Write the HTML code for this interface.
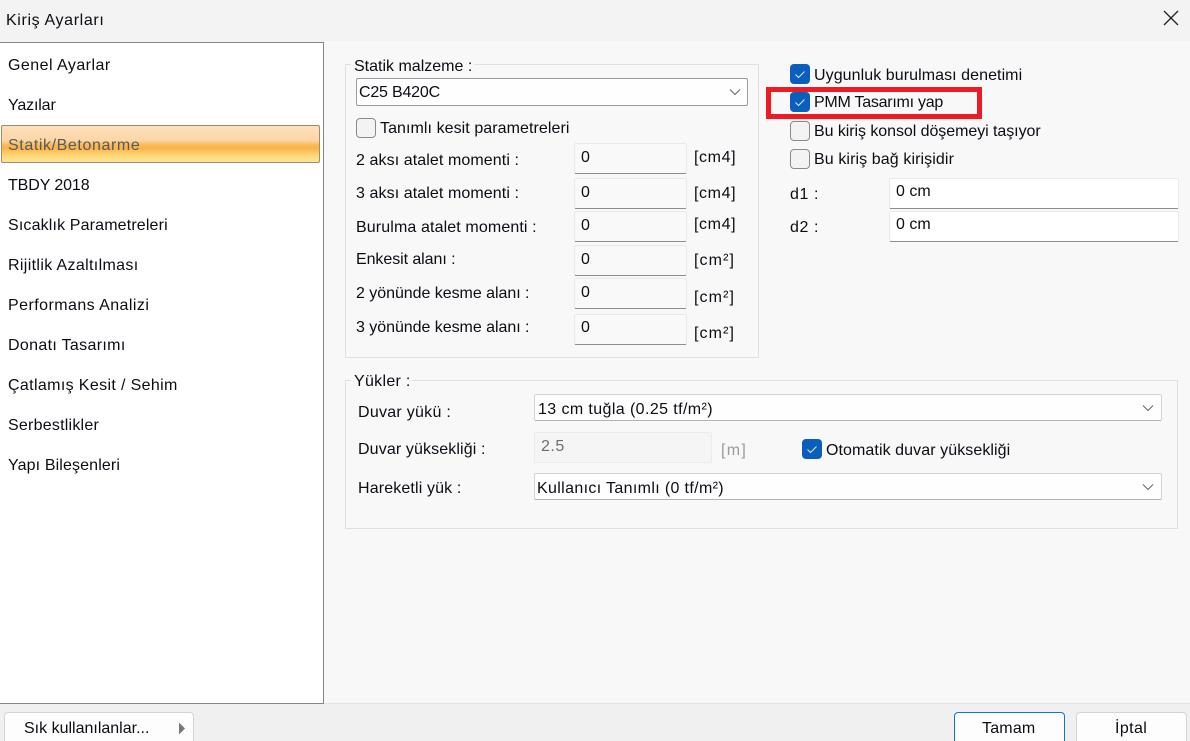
<!DOCTYPE html>
<html lang="tr">
<head>
<meta charset="utf-8">
<title>Kiriş Ayarları</title>
<style>
html,body{margin:0;padding:0;width:1190px;height:741px;overflow:hidden;}
#root{position:absolute;left:0;top:0;width:1190px;height:741px;overflow:hidden;background:#f0f0f0;font-family:"Liberation Sans",sans-serif;font-size:16px;color:#0c0c14;}
.a{position:absolute;box-sizing:border-box;}
.t{position:absolute;white-space:nowrap;line-height:20px;height:20px;margin-top:1px;}
.l{margin-top:2px;}
.inp{position:absolute;box-sizing:border-box;background:#f9f9f9;border:1px solid #e9e9e9;border-bottom:1px solid #8d8d8d;border-radius:2px;width:113px;height:31px;}
.w{background:#fff;}
.cb{position:absolute;width:20px;height:20px;box-sizing:border-box;border-radius:4px;border:1px solid #8a8a8a;background:#f3f3f3;}
.cb.on{background:#0a5fbd;border:none;}
.cb svg{position:absolute;left:0;top:0;}
.sel{position:absolute;box-sizing:border-box;background:#fefefe;border:1px solid #d2d2d2;border-bottom:1px solid #b4b4b4;border-radius:2px;}
.sel svg{position:absolute;}
.gb{position:absolute;box-sizing:border-box;border:1px solid #e0e0e0;}
.btn{position:absolute;box-sizing:border-box;background:#fdfdfd;border:1px solid #d4d4d4;border-radius:4px;height:40px;top:712px;}
</style>
</head>
<body>
<div id="root">
<!-- title bar -->
<div class="a" style="left:0;top:0;width:1190px;height:42px;background:#f3f3f3;"></div>
<div class="t l" style="left:6px;top:9px;letter-spacing:.64px;">Kiriş Ayarları</div>
<svg class="a" style="left:1163px;top:10px;" width="16" height="16" viewBox="0 0 16 16"><path d="M1 1L15 15M15 1L1 15" stroke="#222" stroke-width="1.3" fill="none"/></svg>

<!-- content -->
<div class="a" style="left:324px;top:41px;width:866px;height:663px;background:#f8f8f8;border-bottom:1px solid #e3e3e3;"></div>

<!-- left list -->
<div class="a" style="left:-1px;top:42px;width:325px;height:662px;background:#fff;border:1px solid #85858f;"></div>
<div class="a" style="left:1px;top:125px;width:319px;height:38px;border:1px solid #a08c6c;border-radius:2px;background:linear-gradient(to bottom,#fde0bc 0%,#fdd6a6 40%,#fbb854 53%,#fbb34a 62%,#fdd777 82%,#fee495 100%);"></div>
<div class="t l" style="left:8px;top:54px;letter-spacing:.46px;">Genel Ayarlar</div>
<div class="t l" style="left:8px;top:94px;letter-spacing:-.14px;">Yazılar</div>
<div class="t l" style="left:8px;top:134px;color:#555a62;letter-spacing:.6px;">Statik/Betonarme</div>
<div class="t l" style="left:8px;top:174px;letter-spacing:-.1px;">TBDY 2018</div>
<div class="t l" style="left:8px;top:214px;letter-spacing:.15px;">Sıcaklık Parametreleri</div>
<div class="t l" style="left:8px;top:254px;letter-spacing:.35px;">Rijitlik Azaltılması</div>
<div class="t l" style="left:8px;top:294px;letter-spacing:.44px;">Performans Analizi</div>
<div class="t l" style="left:8px;top:334px;letter-spacing:.33px;">Donatı Tasarımı</div>
<div class="t l" style="left:8px;top:374px;letter-spacing:.36px;">Çatlamış Kesit / Sehim</div>
<div class="t l" style="left:8px;top:414px;letter-spacing:.23px;">Serbestlikler</div>
<div class="t l" style="left:8px;top:454px;letter-spacing:.13px;">Yapı Bileşenleri</div>

<!-- Statik malzeme -->
<div class="gb" style="left:345px;top:64px;width:414px;height:294px;"></div>
<div class="a" style="left:351px;top:58px;width:123px;height:14px;background:#f8f8f8;"></div>
<div class="t l" style="left:354px;top:55px;">Statik malzeme :</div>
<div class="sel" style="left:356px;top:78px;width:392px;height:28px;border-color:#9a9a9a;">
  <svg style="left:372px;top:9px;" width="12" height="8" viewBox="0 0 12 8"><path d="M1 1.5L6 6.5L11 1.5" stroke="#666" stroke-width="1" fill="none"/></svg>
</div>
<div class="t" style="left:359px;top:82px;letter-spacing:-.2px;">C25 B420C</div>
<div class="cb" style="left:356px;top:118px;"></div>
<div class="t" style="left:380px;top:118px;letter-spacing:.07px;">Tanımlı kesit parametreleri</div>

<div class="t" style="left:356px;top:150px;letter-spacing:.09px;">2 aksı atalet momenti :</div>
<div class="inp" style="left:574px;top:143px;"></div>
<div class="t" style="left:581px;top:147px;">0</div>
<div class="t" style="left:694px;top:147px;letter-spacing:.6px;">[cm4]</div>

<div class="t" style="left:356px;top:183px;letter-spacing:.09px;">3 aksı atalet momenti :</div>
<div class="inp" style="left:574px;top:178px;"></div>
<div class="t" style="left:581px;top:182px;">0</div>
<div class="t" style="left:694px;top:183px;letter-spacing:.6px;">[cm4]</div>

<div class="t" style="left:356px;top:217px;letter-spacing:.12px;">Burulma atalet momenti :</div>
<div class="inp" style="left:574px;top:211px;"></div>
<div class="t" style="left:581px;top:215px;">0</div>
<div class="t" style="left:694px;top:214px;letter-spacing:.6px;">[cm4]</div>

<div class="t" style="left:356px;top:249px;letter-spacing:-.07px;">Enkesit alanı :</div>
<div class="inp" style="left:574px;top:245px;"></div>
<div class="t" style="left:581px;top:249px;">0</div>
<div class="t" style="left:694px;top:250px;letter-spacing:1.1px;">[cm²]</div>

<div class="t" style="left:356px;top:283px;letter-spacing:-.04px;">2 yönünde kesme alanı :</div>
<div class="inp" style="left:574px;top:278px;"></div>
<div class="t" style="left:581px;top:282px;">0</div>
<div class="t" style="left:694px;top:287px;letter-spacing:1.1px;">[cm²]</div>

<div class="t" style="left:356px;top:317px;letter-spacing:-.04px;">3 yönünde kesme alanı :</div>
<div class="inp" style="left:574px;top:314px;"></div>
<div class="t" style="left:581px;top:317px;">0</div>
<div class="t" style="left:694px;top:323px;letter-spacing:1.1px;">[cm²]</div>

<!-- right checks -->
<div class="cb on" style="left:790px;top:64px;"><svg width="20" height="20" viewBox="0 0 20 20"><path d="M5.5 10.5L8.5 13.5L14.5 7.5" stroke="#dfeaf6" stroke-width="1" fill="none"/></svg></div>
<div class="t" style="left:814px;top:65px;letter-spacing:.07px;">Uygunluk burulması denetimi</div>

<div class="a" style="left:766px;top:87px;width:216px;height:32px;border:5px solid #ed1c24;"></div>
<div class="cb on" style="left:790px;top:92px;"><svg width="20" height="20" viewBox="0 0 20 20"><path d="M5.5 10.5L8.5 13.5L14.5 7.5" stroke="#dfeaf6" stroke-width="1" fill="none"/></svg></div>
<div class="t" style="left:814px;top:92px;letter-spacing:-.25px;">PMM Tasarımı yap</div>

<div class="cb" style="left:790px;top:121px;"></div>
<div class="t" style="left:814px;top:121px;letter-spacing:-.06px;">Bu kiriş konsol döşemeyi taşıyor</div>

<div class="cb" style="left:790px;top:149px;"></div>
<div class="t" style="left:814px;top:149px;letter-spacing:.1px;">Bu kiriş bağ kirişidir</div>

<div class="t" style="left:790px;top:184px;letter-spacing:.6px;">d1 :</div>
<div class="inp w" style="left:889px;top:178px;width:290px;height:31px;"></div>
<div class="t" style="left:896px;top:181px;">0 cm</div>
<div class="t" style="left:790px;top:217px;letter-spacing:.6px;">d2 :</div>
<div class="inp w" style="left:889px;top:211px;width:290px;height:31px;"></div>
<div class="t" style="left:896px;top:214px;">0 cm</div>

<!-- Yükler -->
<div class="gb" style="left:345px;top:380px;width:833px;height:149px;"></div>
<div class="a" style="left:351px;top:374px;width:61px;height:14px;background:#f8f8f8;"></div>
<div class="t" style="left:354px;top:371px;letter-spacing:.3px;">Yükler :</div>

<div class="t" style="left:358px;top:402px;letter-spacing:.27px;">Duvar yükü :</div>
<div class="sel" style="left:534px;top:394px;width:628px;height:27px;">
  <svg style="left:607px;top:9px;" width="12" height="8" viewBox="0 0 12 8"><path d="M1 1.5L6 6.5L11 1.5" stroke="#666" stroke-width="1" fill="none"/></svg>
</div>
<div class="t" style="left:538px;top:399px;letter-spacing:.4px;">13 cm tuğla (0.25 tf/m²)</div>

<div class="t" style="left:358px;top:439px;letter-spacing:.12px;">Duvar yüksekliği :</div>
<div class="a" style="left:534px;top:432px;width:178px;height:31px;background:#f5f5f5;border:1px solid #ebebeb;border-radius:2px;"></div>
<div class="t" style="left:541px;top:436px;color:#6d6d6d;letter-spacing:.5px;">2.5</div>
<div class="t" style="left:721px;top:440px;color:#9a9a9a;letter-spacing:1.3px;">[m]</div>
<div class="cb on" style="left:802px;top:439px;"><svg width="20" height="20" viewBox="0 0 20 20"><path d="M5.5 10.5L8.5 13.5L14.5 7.5" stroke="#dfeaf6" stroke-width="1" fill="none"/></svg></div>
<div class="t" style="left:826px;top:440px;letter-spacing:.08px;">Otomatik duvar yüksekliği</div>

<div class="t" style="left:358px;top:478px;letter-spacing:.14px;">Hareketli yük :</div>
<div class="sel" style="left:534px;top:473px;width:628px;height:27px;">
  <svg style="left:607px;top:9px;" width="12" height="8" viewBox="0 0 12 8"><path d="M1 1.5L6 6.5L11 1.5" stroke="#666" stroke-width="1" fill="none"/></svg>
</div>
<div class="t" style="left:537px;top:478px;letter-spacing:.35px;">Kullanıcı Tanımlı (0 tf/m²)</div>

<!-- footer -->
<div class="btn" style="left:4px;width:190px;"></div>
<div class="t" style="left:24px;top:718px;">Sık kullanılanlar...</div>
<svg class="a" style="left:178px;top:722px;" width="8" height="13" viewBox="0 0 8 13"><path d="M1 0.5L7 6.5L1 12.5Z" fill="#777"/></svg>
<div class="btn" style="left:954px;width:111px;border-color:#0a78d4;"></div>
<div class="t" style="left:982px;top:718px;letter-spacing:.2px;">Tamam</div>
<div class="btn" style="left:1076px;width:111px;"></div>
<div class="t" style="left:1115px;top:718px;letter-spacing:.4px;">İptal</div>
</div>
</body>
</html>
